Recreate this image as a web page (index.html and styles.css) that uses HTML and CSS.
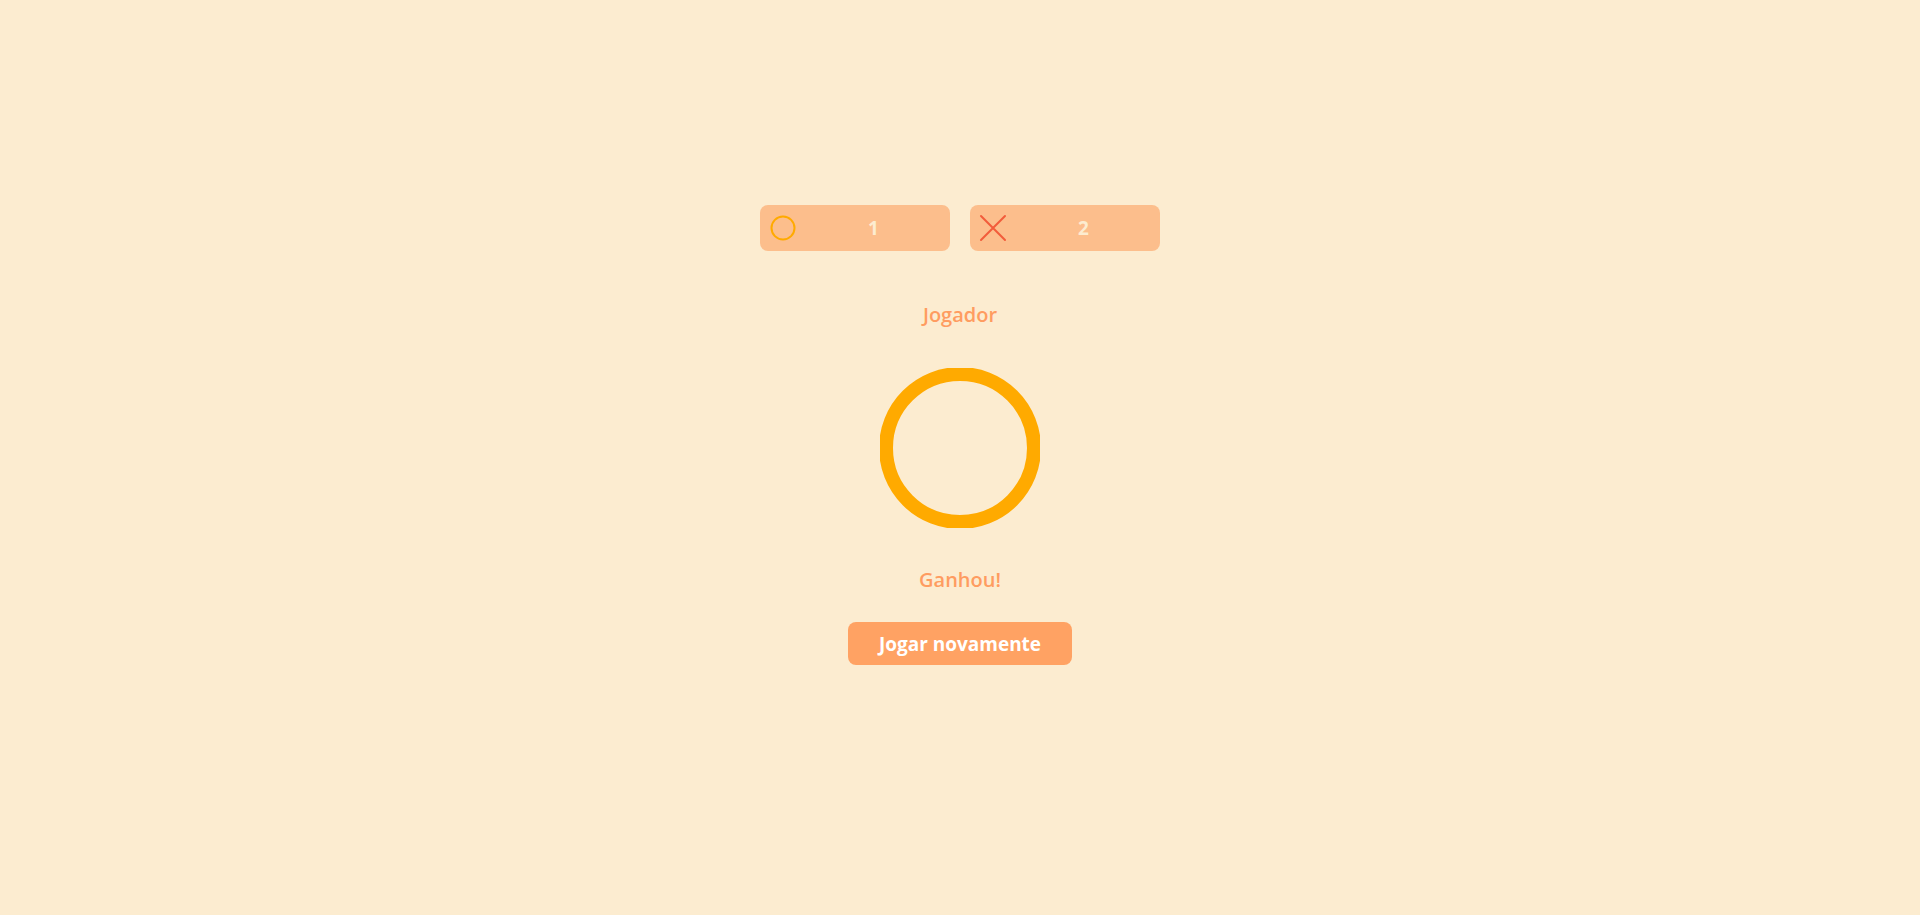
FILE: index.html
```html
<!DOCTYPE html>
<html lang="pt">
<head>
<meta charset="utf-8">
<title>Jogo da Velha</title>
<link rel="stylesheet" href="styles.css">
</head>
<body>
<main class="app">
  <div class="scoreboard">
    <div class="score">
      <svg class="score-icon" viewBox="0 0 28 28" width="28" height="28"><circle cx="14" cy="14" r="11.5" fill="none" stroke="#ffaa00" stroke-width="2"/></svg>
      <span class="score-value">1</span>
    </div>
    <div class="score">
      <svg class="score-icon" viewBox="0 0 28 28" width="28" height="28"><path d="M2 2 L26 26 M26 2 L2 26" fill="none" stroke="#f25c3b" stroke-width="2" stroke-linecap="round"/></svg>
      <span class="score-value">2</span>
    </div>
  </div>
  <p class="label label-player">Jogador</p>
  <svg class="winner" viewBox="0 0 160 160" width="160" height="160"><circle cx="80" cy="80" r="74" fill="none" stroke="#ffaa00" stroke-width="14"/></svg>
  <p class="label label-result">Ganhou!</p>
  <button class="replay" type="button">Jogar novamente</button>
</main>
</body>
</html>
```

FILE: styles.css
```css
html, body {
  margin: 0;
  padding: 0;
  background: #fcecd0;
  font-family: "Open Sans", "Noto Sans", sans-serif;
}

.app {
  display: flex;
  flex-direction: column;
  align-items: center;
  padding-top: 205px;
}

.scoreboard {
  display: flex;
  gap: 20px;
}

.score {
  width: 190px;
  height: 46px;
  box-sizing: border-box;
  padding-left: 9px;
  border-radius: 8px;
  background: #fcbe8c;
  display: flex;
  align-items: center;
}

.score-icon {
  flex: none;
  display: block;
}

.score-value {
  flex: 1;
  text-align: center;
  color: #fcecd0;
  font-weight: 700;
  font-size: 19px;
  line-height: 1;
}

.label {
  margin: 0;
  color: #ff9c60;
  font-weight: 600;
  font-size: 20px;
  line-height: 28px;
}

.label-player {
  margin-top: 50px;
}

.winner {
  display: block;
  margin-top: 39px;
}

.label-result {
  margin-top: 38px;
}

.replay {
  margin-top: 28px;
  width: 224px;
  height: 43px;
  border: none;
  border-radius: 8px;
  background: #ffa263;
  color: #ffffff;
  font-family: "Open Sans", "Noto Sans", sans-serif;
  font-weight: 700;
  font-size: 19px;
  padding: 0;
}
```
